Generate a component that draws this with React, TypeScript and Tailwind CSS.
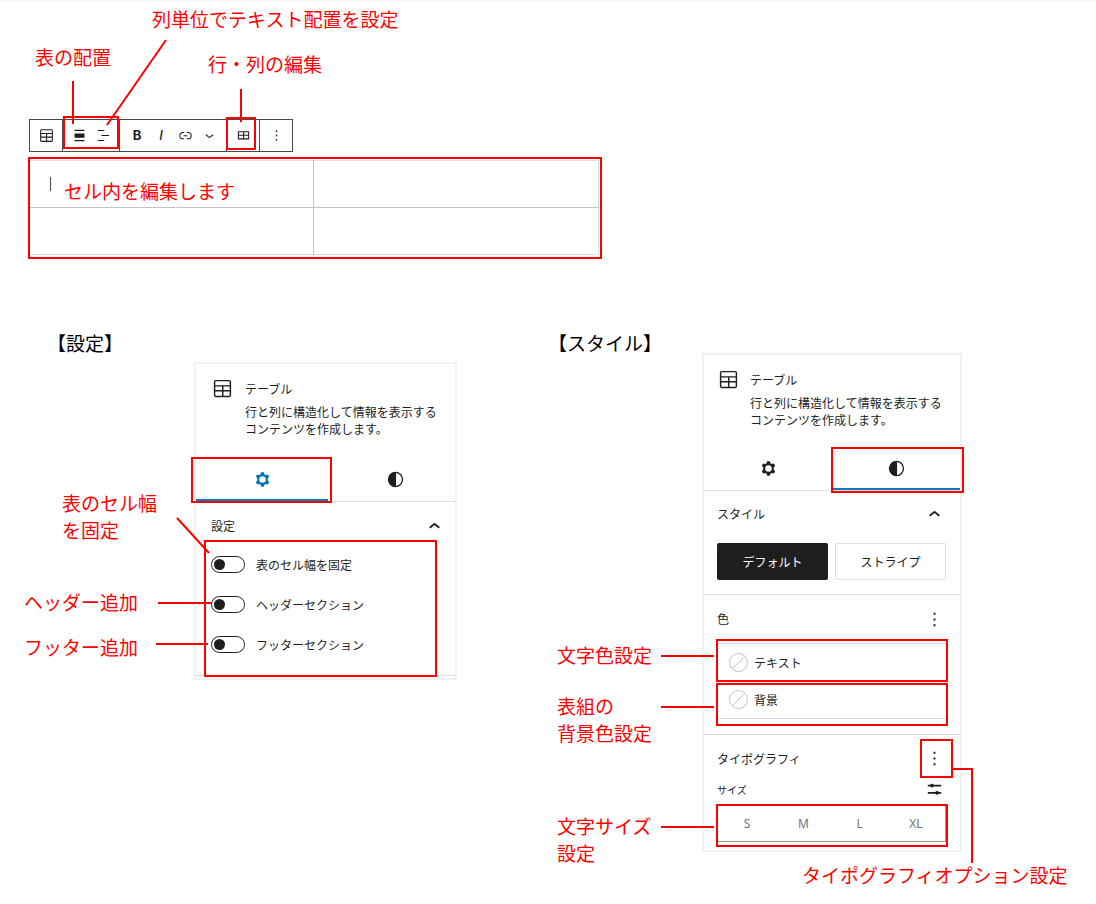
import type { ReactNode } from 'react';

const icons = {
  table:
    'M19 3H5c-1.1 0-2 .9-2 2v14c0 1.1.9 2 2 2h14c1.1 0 2-.9 2-2V5c0-1.1-.9-2-2-2zM5 4.5h14c.3 0 .5.2.5.5v3.5h-15V5c0-.3.2-.5.5-.5zm8 5.5h6.5v3.5H13V10zm-1.5 3.5h-7V10h7v3.5zm-7 5.5v-4h7v4.5H5c-.3 0-.5-.2-.5-.5zm14.5.5h-6V15h6.5v4c0 .3-.2.5-.5.5z',
  alignNone: 'M19 5.8H5V4h14v1.8ZM19 20H5v-1.8h14V20ZM5 9h14v6H5V9Z',
  alignColumn: 'M4 4.2h9v1.6H4zM4 18.2h9v1.6H4zM9 11.2h11v1.6H9z',
  link: 'M10 17.389H8.444A5.194 5.194 0 1 1 8.444 7H10v1.5H8.444a3.694 3.694 0 0 0 0 7.389H10v1.5ZM14 7h1.556a5.194 5.194 0 0 1 0 10.39H14v-1.5h1.556a3.694 3.694 0 0 0 0-7.39H14V7Zm-4.5 6h5v-1.5h-5V13Z',
  chevronDown: 'M17.5 11.6L12 16l-5.5-4.4.9-1.2L12 14l4.5-3.6 1 1.2z',
  chevronUp: 'M6.4 12.6L12 8l5.6 4.6-1.2 1.5L12 10.4l-4.4 3.7z',
  editTable:
    'M4 6v11.5h16V6H4zm1.5 1.5h6V11h-6V7.5zm0 8.5v-3.5h6V16h-6zm13 0H13v-3.5h5.5V16zM13 11V7.5h5.5V11H13z',
  more: 'M13 19h-2v-2h2v2zm0-6h-2v-2h2v2zm0-6h-2V5h2v2z',
  gear: 'M10.6 4.4h2.8l.6 2.1 1.4.8 2.2-.6 1.4 2.5-1.5 1.6v2.4l1.5 1.6-1.4 2.5-2.2-.6-1.4.8-.6 2.1h-2.8l-.6-2.1-1.4-.8-2.2.6L5 14.8l1.5-1.6v-2.4L5 9.2l1.4-2.5 2.2.6 1.4-.8zM15.4 12a3.4 3.4 0 1 1-6.8 0 3.4 3.4 0 0 1 6.8 0z',
  contrast:
    'M12 4a8 8 0 1 0 0 16 8 8 0 0 0 0-16zm.6 1.2a6.85 6.85 0 0 1 0 13.6z',
  sliders:
    'M5 6h2.6a2 2 0 0 1 3.6 0H19v1.8h-7.8a2 2 0 0 1-3.6 0H5zM5 13.6h7.8a2 2 0 0 1 3.6 0H19v1.8h-2.6a2 2 0 0 1-3.6 0H5z',
};

function Icon({ name, className = 'size-[23px]' }: { name: keyof typeof icons; className?: string }) {
  return (
    <svg viewBox="0 0 24 24" fill="currentColor" fillRule="evenodd" className={`shrink-0 ${className}`} aria-hidden="true">
      <path d={icons[name]} />
    </svg>
  );
}

function ToolButton({ label, children }: { label: string; children: ReactNode }) {
  return (
    <button type="button" aria-label={label} className="flex h-full w-6 items-center justify-center">
      {children}
    </button>
  );
}

/* Red note placed on top of a figure */
function Note({ className, children }: { className: string; children: ReactNode }) {
  return (
    <p className={`absolute whitespace-nowrap text-[19px] leading-[27px] text-[#ff0000] ${className}`}>{children}</p>
  );
}

/* Red frames and pointer lines of a figure */
function Marks({ children }: { children: ReactNode }) {
  return (
    <svg
      className="pointer-events-none absolute inset-0 size-full overflow-visible"
      fill="none"
      stroke="#ff0000"
      strokeWidth="2"
      aria-hidden="true"
    >
      {children}
    </svg>
  );
}

function PanelHeader({ className }: { className: string }) {
  return (
    <div className={`flex pt-[13px] ${className}`}>
      <Icon name="table" />
      <div>
        <h2 className="leading-6">テーブル</h2>
        <p className="mt-[2px] whitespace-nowrap leading-[17px]">
          行と列に構造化して情報を表示する
          <br />
          コンテンツを作成します。
        </p>
      </div>
    </div>
  );
}

function SectionTitle({ title, icon, className }: { title: string; icon: 'chevronUp' | 'more'; className: string }) {
  return (
    <div className={`flex items-center justify-between ${className}`}>
      <h3>{title}</h3>
      <button type="button" aria-label={`${title}の操作`}>
        <Icon name={icon} />
      </button>
    </div>
  );
}

const toggles = ['表のセル幅を固定', 'ヘッダーセクション', 'フッターセクション'];
const colors = ['テキスト', '背景'];
const sizes = ['S', 'M', 'L', 'XL'];

function EditorFigure() {
  return (
    <section className="relative pt-[119px] pl-[29px]">
      <div
        role="toolbar"
        aria-label="ブロックツール"
        className="flex h-[33px] w-fit divide-x divide-[#4a4a4a] border border-[#4a4a4a]"
      >
        <div className="flex px-1">
          <ToolButton label="テーブル">
            <Icon name="table" className="size-[17px]" />
          </ToolButton>
        </div>
        <div className="flex px-1">
          <ToolButton label="配置">
            <Icon name="alignNone" className="size-[17px]" />
          </ToolButton>
          <ToolButton label="列の配置を変更">
            <Icon name="alignColumn" className="size-[17px]" />
          </ToolButton>
        </div>
        <div className="flex px-[5px]">
          <ToolButton label="太字">
            <b className="font-['Inter',sans-serif] text-[13px]">B</b>
          </ToolButton>
          <ToolButton label="イタリック">
            <i className="font-['Inter',sans-serif] text-[13px] font-medium">I</i>
          </ToolButton>
          <ToolButton label="リンク">
            <Icon name="link" className="size-[17px]" />
          </ToolButton>
          <ToolButton label="さらに表示">
            <Icon name="chevronDown" className="size-[17px]" />
          </ToolButton>
        </div>
        <div className="flex px-1">
          <ToolButton label="表を編集">
            <Icon name="editTable" className="size-[17px]" />
          </ToolButton>
        </div>
        <div className="flex px-1">
          <ToolButton label="オプション">
            <Icon name="more" className="size-[17px]" />
          </ToolButton>
        </div>
      </div>

      <table className="mt-2 w-[570px] table-fixed border-collapse border border-[#d5e3e5]">
        <tbody>
          <tr className="h-[47px]">
            <td className="w-[284px] border-r border-b border-[#c3c3c3] pl-5">
              <span className="block h-[14px] w-px bg-[#4a4a4a]" />
            </td>
            <td className="border-b border-[#c3c3c3]" />
          </tr>
          <tr className="h-[47px]">
            <td className="border-r border-[#c3c3c3]" />
            <td />
          </tr>
        </tbody>
      </table>

      <Marks>
        <rect x="64" y="117" width="54" height="31" />
        <rect x="227" y="118" width="28" height="31" />
        <rect x="29" y="158" width="572" height="100" />
        <path d="M73 81v43M241 89v33M166 40L107 125" />
      </Marks>
      <Note className="top-[5px] left-[152px]">列単位でテキスト配置を設定</Note>
      <Note className="top-[43px] left-[35px]">表の配置</Note>
      <Note className="top-[50px] left-[208px]">行・列の編集</Note>
      <Note className="top-[177px] left-[64px]">セル内を編集します</Note>
    </section>
  );
}

function SettingsFigure() {
  return (
    <section className="relative flex items-start pl-[47px]">
      <h1 className="w-[147px] pt-[10px] text-[19px] leading-[27px] text-black">【設定】</h1>
      <div className="mt-[43px] w-[263px] border-2 border-[#f1f1f1] pb-[2px]">
        <PanelHeader className="h-[93px] gap-[11px] pl-[15px]" />
        <div role="tablist" className="flex h-[45px] border-b border-[#dddddd]">
          <button
            type="button"
            role="tab"
            aria-label="設定"
            aria-selected="true"
            className="flex w-[132px] items-center justify-center text-[#0073b4] shadow-[inset_0_-2px_0_#007cba]"
          >
            <Icon name="gear" />
          </button>
          <button
            type="button"
            role="tab"
            aria-label="スタイル"
            aria-selected="false"
            className="flex flex-1 items-center justify-center pl-2"
          >
            <Icon name="contrast" />
          </button>
        </div>
        <SectionTitle title="設定" icon="chevronUp" className="h-12 pr-[9px] pl-[15px]" />
        <div className="flex flex-col gap-[23px] border-b border-[#dddddd] pt-[6px] pb-[22px] pl-[15px]">
          {toggles.map((label) => (
            <label key={label} className="flex h-[17px] items-center gap-[11px]">
              <input
                type="checkbox"
                role="switch"
                className="h-[17px] w-[34px] appearance-none rounded-full border border-[#1e1e1e] bg-white p-[2px] before:block before:size-[11px] before:rounded-full before:bg-[#1e1e1e]"
              />
              {label}
            </label>
          ))}
        </div>
      </div>

      <Marks>
        <rect x="192" y="139" width="139" height="44" />
        <rect x="205" y="222" width="231" height="135" />
        <path d="M177 199L209 234M158 284h53M156 325h52" />
      </Marks>
      <Note className="top-[170px] left-[62px]">
        表のセル幅
        <br />
        を固定
      </Note>
      <Note className="top-[269px] left-[24px]">ヘッダー追加</Note>
      <Note className="top-[314px] left-[24px]">フッター追加</Note>
    </section>
  );
}

function StyleFigure() {
  return (
    <section className="relative flex items-start">
      <h1 className="w-[154px] pt-[10px] text-[19px] leading-[27px] text-black">【スタイル】</h1>
      <div className="mt-[34px] w-[260px] border-2 border-[#f1f1f1]">
        <PanelHeader className="h-[91px] gap-[10px] pl-[13px]" />
        <div role="tablist" className="grid h-[45px] grid-cols-2 border-b border-[#dddddd]">
          <button
            type="button"
            role="tab"
            aria-label="設定"
            aria-selected="false"
            className="flex items-center justify-center"
          >
            <Icon name="gear" />
          </button>
          <button
            type="button"
            role="tab"
            aria-label="スタイル"
            aria-selected="true"
            className="flex items-center justify-center shadow-[inset_0_-2px_0_#007cba]"
          >
            <Icon name="contrast" />
          </button>
        </div>

        <div className="border-b border-[#dddddd] pr-[14px] pb-[14px] pl-[13px]">
          <SectionTitle title="スタイル" icon="chevronUp" className="h-[46px]" />
          <div className="mt-[6px] grid grid-cols-2 gap-[7px]">
            <button type="button" className="h-[37px] rounded-xs bg-[#1e1e1e] text-white">
              デフォルト
            </button>
            <button type="button" className="h-[37px] rounded-xs border border-[#dddddd]">
              ストライプ
            </button>
          </div>
        </div>

        <div className="border-b border-[#dddddd] pr-[14px] pb-[15px] pl-[13px]">
          <SectionTitle title="色" icon="more" className="h-12" />
          <div className="border-y border-[#dddddd]">
            {colors.map((label) => (
              <button key={label} type="button" className="flex h-[37px] w-full items-center gap-[6px] pl-3">
                <svg viewBox="0 0 19 19" className="size-[19px]" fill="none" stroke="#c4c4c4" aria-hidden="true">
                  <circle cx="9.5" cy="9.5" r="9" />
                  <path d="M3.5 15.5l12-12" />
                </svg>
                {label}
              </button>
            ))}
          </div>
        </div>

        <div className="pr-[14px] pb-2 pl-[13px]">
          <SectionTitle title="タイポグラフィ" icon="more" className="h-[47px]" />
          <div className="flex h-4 items-center justify-between text-[10px]">
            <span>サイズ</span>
            <button type="button" aria-label="カスタムサイズを設定">
              <Icon name="sliders" />
            </button>
          </div>
          <div className="mt-[7px] flex h-[37px] border border-[#949494] px-px text-[#757575]">
            {sizes.map((size) => (
              <button key={size} type="button" className="flex-1 font-['Noto_Sans',sans-serif]">
                {size}
              </button>
            ))}
          </div>
        </div>
      </div>

      <Marks>
        <rect x="284" y="129" width="131" height="44" />
        <rect x="169" y="321" width="230" height="41" />
        <rect x="169" y="365" width="230" height="41" />
        <rect x="373" y="421" width="31" height="37" />
        <rect x="169" y="486" width="230" height="41" />
        <path d="M113 337h53M113 388h53M113 508h53M405 450h19v94" />
      </Marks>
      <Note className="top-[322px] left-[9px]">文字色設定</Note>
      <Note className="top-[373px] left-[9px]">
        表組の
        <br />
        背景色設定
      </Note>
      <Note className="top-[493px] left-[9px]">
        文字サイズ
        <br />
        設定
      </Note>
      <Note className="top-[542px] left-[254px]">タイポグラフィオプション設定</Note>
    </section>
  );
}

export default function App() {
  return (
    <main className="min-h-screen bg-white pb-[52px] font-['Noto_Sans_CJK_JP',sans-serif] text-xs text-[#1e1e1e] shadow-[inset_0_2px_0_#f8f8f8]">
      <EditorFigure />
      <div className="mt-16 grid grid-cols-2">
        <SettingsFigure />
        <StyleFigure />
      </div>
    </main>
  );
}
